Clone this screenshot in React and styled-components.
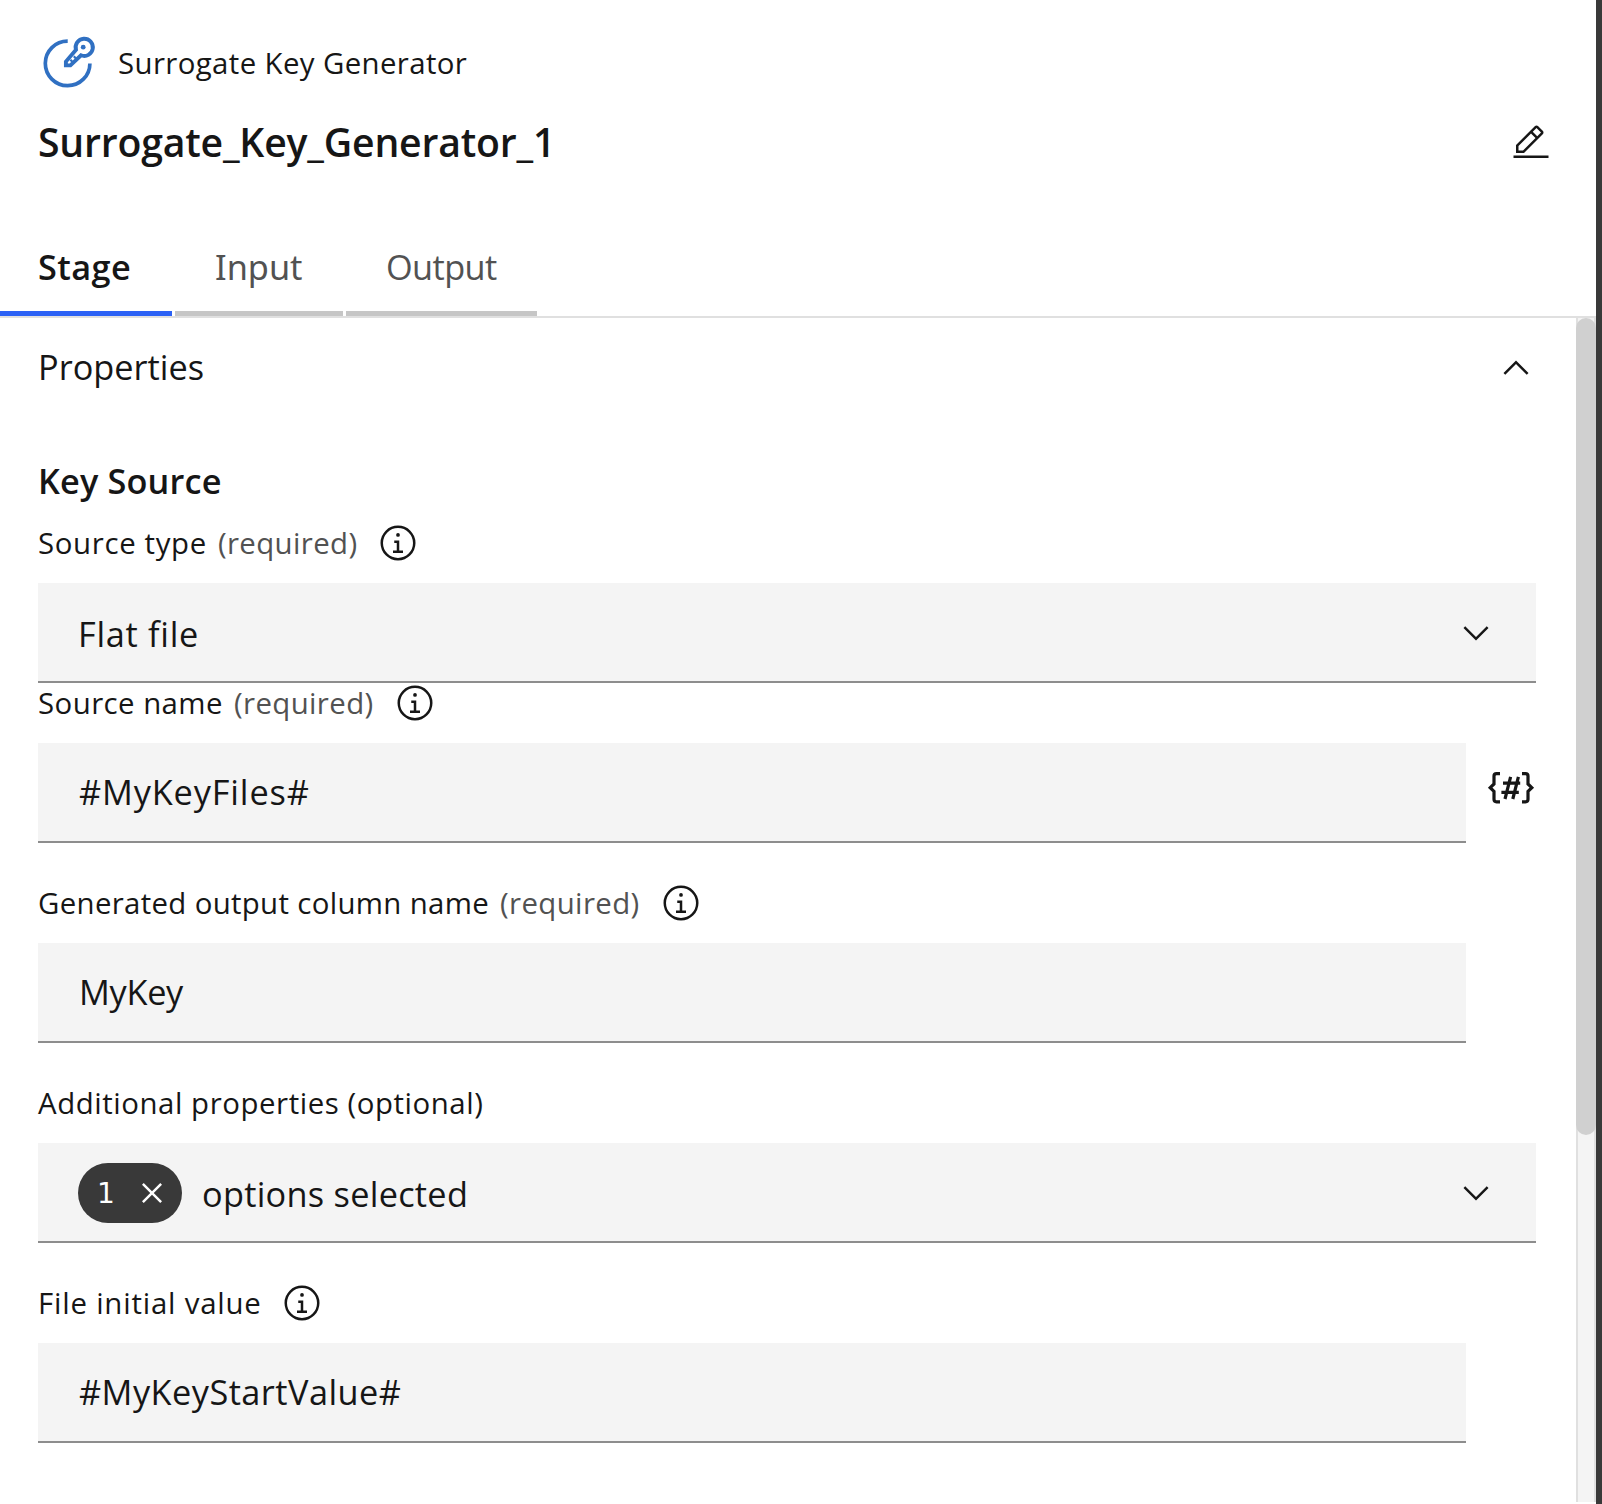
import React from "react";
import styled, { createGlobalStyle } from "styled-components";

const GlobalStyle = createGlobalStyle`
  html, body { margin: 0; padding: 0; background: #393939; }
  *, *::before, *::after { box-sizing: border-box; }
`;

const Shell = styled.div`
  display: flex;
  flex-direction: column;
  width: 1596px;
  height: 1504px;
  overflow: hidden;
  background: #ffffff;
  color: #161616;
  font-family: "Open Sans", "Noto Sans", sans-serif;
`;

const Header = styled.header`
  display: flex;
  flex-direction: column;
  height: 218px;
  padding: 32px 45px 0 38px;
`;

const StageType = styled.div`
  display: flex;
  align-items: center;
  gap: 20px;
  height: 61px;
  font-size: 29.4px;
  letter-spacing: 0.38px;
`;

const TitleRow = styled.div`
  display: flex;
  justify-content: space-between;
  height: 40px;
  margin-top: 30px;
`;

const Title = styled.h1`
  margin: 0;
  font-size: 39.2px;
  line-height: 38px;
  font-weight: 650;
  letter-spacing: -0.2px;
`;

const IconButton = styled.button`
  display: flex;
  padding: 0;
  border: 0;
  background: none;
  color: inherit;
`;

const Icon = styled.svg`
  display: block;
  flex: none;
  width: ${(p) => p.$size || 40}px;
  height: ${(p) => p.$size || 40}px;
  fill: currentColor;
`;

const Tabs = styled.nav`
  display: flex;
  gap: 3px;
  height: 100px;
  border-bottom: 2px solid #e0e0e0;
`;

const Tab = styled.button`
  width: ${(p) => p.$width}px;
  height: 98px;
  padding: 3px 0 0 ${(p) => (p.$active ? 38 : 40)}px;
  border: 0;
  border-bottom: 5px solid ${(p) => (p.$active ? "#2b61f5" : "#c6c6c6")};
  background: none;
  color: ${(p) => (p.$active ? "#161616" : "#525252")};
  font-family: ${(p) => p.$face || '"Open Sans"'}, sans-serif;
  font-size: 34.3px;
  font-weight: ${(p) => (p.$active ? 650 : 400)};
  letter-spacing: ${(p) => p.$track}px;
  text-align: left;
`;

const Body = styled.div`
  display: flex;
  flex: 1;
  min-height: 0;
`;

const Content = styled.main`
  flex: 1;
  padding: 0 40px 0 38px;
`;

const SectionHeader = styled.div`
  display: flex;
  align-items: center;
  justify-content: space-between;
  height: 100px;
`;

const SectionTitle = styled.h2`
  margin: 0 0 4px;
  font-size: 34.3px;
  font-weight: 400;
  letter-spacing: 0px;
`;

const GroupTitle = styled.h3`
  height: 65px;
  margin: 40px 0 0;
  font-size: 34.3px;
  line-height: 45px;
  font-weight: 650;
  letter-spacing: 0.15px;
`;

const Field = styled.div`
  margin-bottom: ${(p) => (p.$tight ? 0 : 40)}px;
`;

const LabelRow = styled.div`
  display: flex;
  align-items: center;
  height: 40px;
  margin-bottom: 20px;
  font-size: 29.4px;
  white-space: nowrap;
`;

const Label = styled.label`
  letter-spacing: ${(p) => p.$track}px;
`;

const Required = styled.span`
  margin-left: 11px;
  margin-right: 1px;
  color: #525252;
  letter-spacing: 0.38px;
`;

const InfoButton = styled(IconButton)`
  margin-left: 20px;
`;

const ControlRow = styled.div`
  display: flex;
  gap: 20px;
`;

const Control = styled.div`
  display: flex;
  align-items: center;
  width: 1428px;
  height: 100px;
  padding: 0 40px 1px 41px;
  border-bottom: 2px solid #8d8d8d;
  background: #f4f4f4;
  font-size: 34.3px;
  letter-spacing: ${(p) => p.$track}px;
`;

const SelectControl = styled(Control)`
  width: 1498px;
  padding: 2px 40px 0;
`;

const Value = styled.span`
  flex: 1;
`;

const ParameterButton = styled(IconButton)`
  height: 50px;
  margin-top: 20px;
`;

const Tag = styled.span`
  display: flex;
  align-items: center;
  justify-content: space-between;
  width: 104px;
  height: 60px;
  margin-right: 20px;
  padding: 0 10px 0 19px;
  border-radius: 30px;
  background: #393939;
  color: #ffffff;
  font-family: "DejaVu Sans", sans-serif;
  font-size: 28px;
`;

const ScrollTrack = styled.div`
  width: 20px;
  height: 1184px;
  background: linear-gradient(to right, #e0e0e0 2px, #f4f4f4 2px, #f4f4f4 18px, #e0e0e0 18px);
`;

const ScrollThumb = styled.div`
  height: 817px;
  border-radius: 10px;
  background: #d0d0d0;
`;

const KeyGeneratorIcon = () => (
  <Icon $size={60} viewBox="38.6 32.8 60 60">
    <g fill="none" stroke="#3070c2">
      <path strokeWidth="3.7" d="M68.3 40.9A22.3 22.3 0 1 0 90.5 63.2" />
      <path
        strokeWidth="3.9"
        d="M76.6 49.6A8.6 8.6 0 1 1 81.6 55.1L71 65.2H66.5V61.4L76.6 49.6Z"
      />
      <path strokeWidth="2.2" d="M71 59.6L73.4 62M74.4 56.1L76.8 58.5" />
    </g>
    <circle cx="83.8" cy="47" r="2.4" fill="#3070c2" />
  </Icon>
);

const EditIcon = () => (
  <Icon viewBox="0 0 32 32">
    <path d="M2 26H30V28H2zM25.4 9c.8-.8.8-2 0-2.8l-3.6-3.6c-.8-.8-2-.8-2.8 0l-15 15V24h6.4L25.4 9zM20.4 4L24 7.6l-3 3L17.4 7 20.4 4zM6 22v-3.6l10-10 3.6 3.6-10 10H6z" />
  </Icon>
);

const ChevronUp = () => (
  <Icon viewBox="0 0 16 16">
    <path d="M8 5L13 10 12.3 10.7 8 6.4 3.7 10.7 3 10z" />
  </Icon>
);

const ChevronDown = () => (
  <Icon viewBox="0 0 16 16">
    <path d="M8 11L3 6 3.7 5.3 8 9.6 12.3 5.3 13 6z" />
  </Icon>
);

const InfoIcon = () => (
  <Icon viewBox="0 0 32 32">
    <path d="M17 22V14H13V16H15V22H12V24H20V22zM16 8a1.5 1.5 0 1 0 1.5 1.5A1.5 1.5 0 0 0 16 8z" />
    <path d="M16 30A14 14 0 1 1 30 16 14 14 0 0 1 16 30zM16 4A12 12 0 1 0 28 16 12 12 0 0 0 16 4z" />
  </Icon>
);

const CloseIcon = () => (
  <Icon viewBox="0 0 32 32">
    <path d="M17.4 16L24 9.4 22.6 8 16 14.6 9.4 8 8 9.4 14.6 16 8 22.6 9.4 24 16 17.4 22.6 24 24 22.6z" />
  </Icon>
);

const ParameterIcon = () => (
  <Icon $size={50} viewBox="0 0 50 50">
    <g fill="none" stroke="currentColor" strokeWidth="3.2">
      <path d="M14 10.7H10.5Q8 10.7 8 13V21L4.2 24.7L8 28.4V36.3Q8 38.8 10.5 38.8H14" />
      <path d="M36 10.7H39.5Q42 10.7 42 13V21L45.8 24.7L42 28.4V36.3Q42 38.8 39.5 38.8H36" />
      <path d="M24.6 13.8L19 36M32.4 13.8L26.8 36M17 20.2H34.2M15.4 29.4H32.8" />
    </g>
  </Icon>
);

function FieldLabel({ text, track, required, info }) {
  return (
    <LabelRow>
      <Label $track={track}>{text}</Label>
      {required && <Required>(required)</Required>}
      {info && (
        <InfoButton aria-label="Information">
          <InfoIcon />
        </InfoButton>
      )}
    </LabelRow>
  );
}

export default function App() {
  return (
    <Shell>
      <GlobalStyle />
      <Header>
        <StageType>
          <KeyGeneratorIcon />
          <span>Surrogate Key Generator</span>
        </StageType>
        <TitleRow>
          <Title>Surrogate_Key_Generator_1</Title>
          <IconButton aria-label="Edit">
            <EditIcon />
          </IconButton>
        </TitleRow>
      </Header>
      <Tabs>
        <Tab $active $width={172} $track={0.4}>Stage</Tab>
        <Tab $width={168} $track={0} $face={'"Noto Sans"'}>Input</Tab>
        <Tab $width={191} $track={-0.6}>Output</Tab>
      </Tabs>
      <Body>
        <Content>
          <SectionHeader>
            <SectionTitle>Properties</SectionTitle>
            <IconButton aria-label="Collapse">
              <ChevronUp />
            </IconButton>
          </SectionHeader>
          <GroupTitle>Key Source</GroupTitle>

          <Field $tight>
            <FieldLabel text="Source type" track={0.65} required info />
            <SelectControl $track={0.7}>
              <Value>Flat file</Value>
              <ChevronDown />
            </SelectControl>
          </Field>

          <Field>
            <FieldLabel text="Source name" track={0.44} required info />
            <ControlRow>
              <Control $track={0.86}>#MyKeyFiles#</Control>
              <ParameterButton aria-label="Parameter">
                <ParameterIcon />
              </ParameterButton>
            </ControlRow>
          </Field>

          <Field>
            <FieldLabel text="Generated output column name" track={0.33} required info />
            <Control $track={-0.3}>MyKey</Control>
          </Field>

          <Field>
            <FieldLabel text="Additional properties (optional)" track={0.56} />
            <SelectControl $track={0.27}>
              <Tag>
                1
                <CloseIcon />
              </Tag>
              <Value>options selected</Value>
              <ChevronDown />
            </SelectControl>
          </Field>

          <Field>
            <FieldLabel text="File initial value" track={0.8} info />
            <Control $track={0.46}>#MyKeyStartValue#</Control>
          </Field>
        </Content>
        <ScrollTrack>
          <ScrollThumb />
        </ScrollTrack>
      </Body>
    </Shell>
  );
}
